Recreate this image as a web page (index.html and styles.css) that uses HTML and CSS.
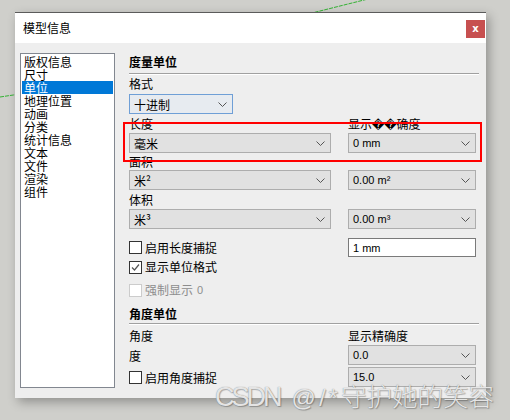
FILE: index.html
```html
<!DOCTYPE html>
<html>
<head>
<meta charset="utf-8">
<link rel="stylesheet" href="styles.css">
</head>
<body>
<svg class="bgline" width="510" height="420" viewBox="0 0 510 420">
  <line x1="0" y1="97" x2="20" y2="94" stroke="#33b233" stroke-width="1" stroke-dasharray="4 1"/>
  <line x1="300" y1="16" x2="368" y2="-1" stroke="#33b233" stroke-width="1" stroke-dasharray="4 1"/>
</svg>
<div class="window">
  <div class="titlebar">
    <span class="title">模型信息</span>
    <div class="close">x</div>
  </div>
  <div class="content">
    <ul class="list">
      <li>版权信息</li>
      <li>尺寸</li>
      <li class="sel">单位</li>
      <li>地理位置</li>
      <li>动画</li>
      <li>分类</li>
      <li>统计信息</li>
      <li>文本</li>
      <li>文件</li>
      <li>渲染</li>
      <li>组件</li>
    </ul>
    <div class="panel">
      <div class="sec-head">度量单位</div>
      <div class="lbl h20">格式</div>
      <div class="select select-format"><span>十进制</span><svg class="chev" width="9" height="5"><polyline points="0.5,0.5 4.5,4.5 8.5,0.5" fill="none" stroke="#555"/></svg></div>
      <div class="lbl-row h19"><span class="col-l">长度</span><span class="col-r">显示��确度</span></div>
      <div class="sel-row">
        <div class="select wide"><span>毫米</span><svg class="chev" width="9" height="5"><polyline points="0.5,0.5 4.5,4.5 8.5,0.5" fill="none" stroke="#555"/></svg></div>
        <div class="select narrow"><span class="lat">0 mm</span><svg class="chev" width="9" height="5"><polyline points="0.5,0.5 4.5,4.5 8.5,0.5" fill="none" stroke="#555"/></svg></div>
      </div>
      <div class="lbl h17">面积</div>
      <div class="sel-row">
        <div class="select wide"><span>米²</span><svg class="chev" width="9" height="5"><polyline points="0.5,0.5 4.5,4.5 8.5,0.5" fill="none" stroke="#555"/></svg></div>
        <div class="select narrow"><span class="lat">0.00 m²</span><svg class="chev" width="9" height="5"><polyline points="0.5,0.5 4.5,4.5 8.5,0.5" fill="none" stroke="#555"/></svg></div>
      </div>
      <div class="lbl h19">体积</div>
      <div class="sel-row">
        <div class="select wide"><span>米³</span><svg class="chev" width="9" height="5"><polyline points="0.5,0.5 4.5,4.5 8.5,0.5" fill="none" stroke="#555"/></svg></div>
        <div class="select narrow"><span class="lat">0.00 m³</span><svg class="chev" width="9" height="5"><polyline points="0.5,0.5 4.5,4.5 8.5,0.5" fill="none" stroke="#555"/></svg></div>
      </div>
      <div class="cb-row first">
        <label class="cb col-l"><span class="box"></span>启用长度捕捉</label>
        <div class="input"><span class="lat">1 mm</span></div>
      </div>
      <div class="cb-row h20">
        <label class="cb"><span class="box"><svg width="11" height="11"><polyline points="2,5.5 4.5,8 9,2.5" fill="none" stroke="#555" stroke-width="1.2"/></svg></span>显示单位格式</label>
      </div>
      <div class="cb-row h20 third">
        <label class="cb disabled"><span class="box"></span>强制显示<span class="lat zero">0</span></label>
      </div>
      <div class="sec-head sec2">角度单位</div>
      <div class="lbl-row h21"><span class="col-l">角度</span><span class="col-r">显示精确度</span></div>
      <div class="sel-row">
        <span class="col-l">度</span>
        <div class="select narrow"><span class="lat">0.0</span><svg class="chev" width="9" height="5"><polyline points="0.5,0.5 4.5,4.5 8.5,0.5" fill="none" stroke="#555"/></svg></div>
      </div>
      <div class="sel-row last">
        <label class="cb col-l"><span class="box"></span>启用角度捕捉</label>
        <div class="select narrow"><span class="lat">15.0</span><svg class="chev" width="9" height="5"><polyline points="0.5,0.5 4.5,4.5 8.5,0.5" fill="none" stroke="#555"/></svg></div>
      </div>
    </div>
  </div>
</div>
<div class="redbox"></div>
<div class="watermark"><span class="wm-csdn">CSDN</span><span class="wm-sym">@/*</span><span class="wm-cjk">守护她的笑容</span></div>
</body>
</html>
```

FILE: styles.css
```css
html, body {
  margin: 0;
}
body {
  width: 510px;
  height: 420px;
  box-sizing: border-box;
  padding: 12px 0 0 15px;
  background: #cfcfcb;
  position: relative;
  overflow: hidden;
  font-family: "Noto Sans CJK SC", "DejaVu Sans", sans-serif;
  font-size: 12px;
  color: #000;
}
.bgline {
  position: absolute;
  left: 0;
  top: 0;
}
.window {
  position: relative;
  width: 471px;
  height: 386px;
  box-sizing: border-box;
  border-top: 1px solid #5b5b5b;
  background: #eeeeee;
  box-shadow: 3px 4px 10px rgba(0, 0, 0, 0.3);
  display: flex;
  flex-direction: column;
}
.titlebar {
  height: 30px;
  flex: none;
  background: #fff;
  display: flex;
  justify-content: space-between;
  align-items: flex-start;
}
.title {
  padding-left: 8px;
  line-height: 30px;
  font-size: 12px;
}
.close {
  width: 19px;
  height: 18px;
  margin: 7px 1px 0 0;
  background: #c75050;
  color: #fff;
  font-family: "DejaVu Sans", sans-serif;
  font-weight: bold;
  font-size: 10px;
  line-height: 18px;
  text-align: center;
}
.content {
  flex: 1;
  display: flex;
  align-items: flex-start;
  padding: 10px 0 0 5px;
}
.list {
  width: 95px;
  height: 335px;
  box-sizing: border-box;
  margin: 0;
  padding: 1px;
  list-style: none;
  background: #fff;
  border: 1px solid #828790;
}
.list li {
  height: 13px;
  line-height: 13px;
  padding-left: 2px;
  white-space: nowrap;
}
.list li.sel {
  background: #0078d7;
  color: #fff;
}
.panel {
  margin-left: 14px;
  width: 350px;
  display: flex;
  flex-direction: column;
}
.sec-head {
  height: 20px;
  line-height: 18px;
  font-weight: bold;
  border-bottom: 1px solid #a0a0a0;
  box-shadow: 0 1px 0 #fff;
}
.sec-head.sec2 {
  height: 18px;
  padding-top: 5px;
}
.lbl {
  white-space: nowrap;
}
.h17 { height: 17px; line-height: 17px; }
.h19 { height: 19px; line-height: 19px; }
.h20 { height: 20px; line-height: 20px; }
.h21 { height: 18px; line-height: 18px; padding-top: 3px; }
.lbl-row {
  display: flex;
  white-space: nowrap;
}
.col-l {
  width: 219px;
  flex: none;
}
.sel-row {
  display: flex;
  align-items: center;
  height: 20px;
}
.sel-row.last {
  margin-top: 2px;
}
.select {
  height: 20px;
  box-sizing: border-box;
  border: 1px solid #adadad;
  background: #e1e1e1;
  display: flex;
  align-items: center;
  justify-content: space-between;
  padding: 0 5px 0 4px;
  white-space: nowrap;
}
.select-format {
  width: 104px;
  background: #e7ebf0;
  border-color: #6f9fd6;
}
.wide {
  width: 202px;
  margin-right: 17px;
}
.narrow {
  width: 128px;
}
.lat {
  font-family: "Liberation Sans", "DejaVu Sans", sans-serif;
  font-size: 11px;
}
.zero {
  margin-left: 4px;
}
.chev {
  display: block;
}
.cb-row {
  display: flex;
  align-items: center;
}
.cb-row.first {
  height: 19px;
  margin-top: 9px;
}
.cb-row.third {
  margin-top: 3px;
}
.cb {
  display: flex;
  align-items: center;
  white-space: nowrap;
}
.box {
  width: 13px;
  height: 13px;
  box-sizing: border-box;
  border: 1px solid #333;
  background: #fff;
  margin-right: 3px;
  display: flex;
  align-items: center;
  justify-content: center;
}
.cb.disabled {
  color: #8d8d8d;
}
.cb.disabled .box {
  border-color: #cccccc;
}
.input {
  width: 128px;
  height: 19px;
  box-sizing: border-box;
  border: 1px solid #7a7a7a;
  background: #fff;
  padding-left: 4px;
  display: flex;
  align-items: center;
}
.redbox {
  position: absolute;
  left: 123px;
  top: 122px;
  width: 359px;
  height: 40px;
  box-sizing: border-box;
  border: 2px solid #ff0000;
}
.watermark {
  position: absolute;
  left: 215px;
  top: 380px;
  white-space: nowrap;
  font-family: "Liberation Sans", sans-serif;
  font-size: 27px;
  line-height: 30px;
  color: rgba(248, 248, 248, 0.85);
  text-shadow: 0 0 1px #777, 1px 1px 1px rgba(0, 0, 0, 0.25);
}
.wm-csdn {
  letter-spacing: -3px;
}
.wm-sym {
  font-size: 24px;
  letter-spacing: 3px;
  margin-left: 12px;
}
.wm-cjk {
  font-family: "Noto Sans CJK SC", sans-serif;
  font-size: 25.5px;
  font-weight: 300;
}
```
